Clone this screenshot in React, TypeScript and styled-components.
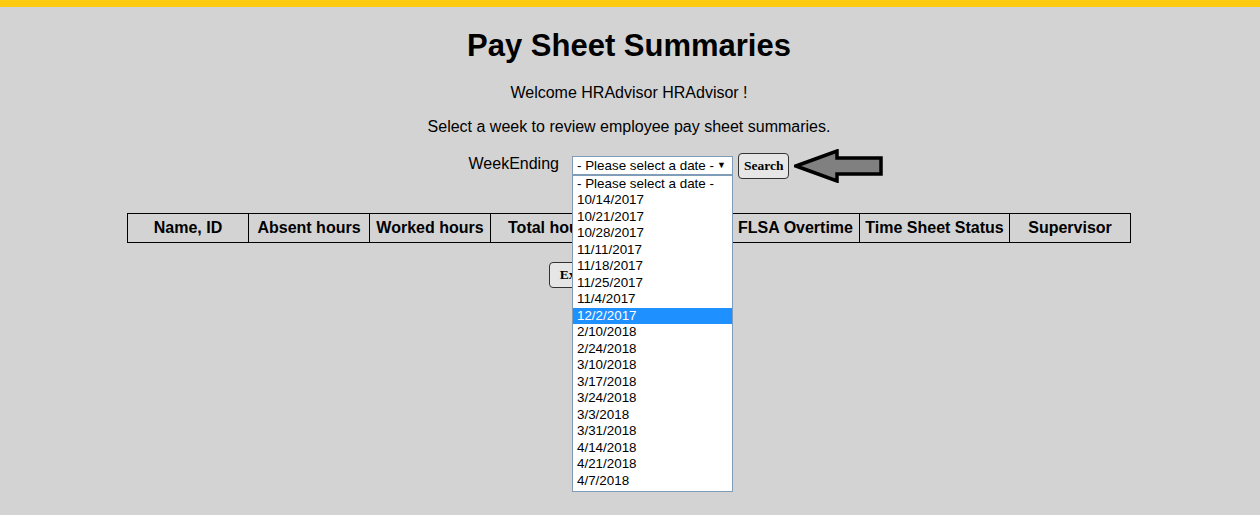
import React from 'react'
import styled, { createGlobalStyle } from 'styled-components'

const GlobalStyle = createGlobalStyle`
    html, body {
        margin: 0;
        padding: 0;
        background-color: #d3d3d3;
        font-family: Arial, "Liberation Sans", sans-serif;
        color: #000;
    }
`

const Page = styled.div`
    min-height: 515px;
    background-color: #d3d3d3;
    border-top: 7px solid #fdca10;
    text-align: center;
    padding: 21px 2px 0 0;
    box-sizing: border-box;
`

const Title = styled.h1`
    font-size: 31px;
    font-weight: 700;
    margin: 0 0 20px 0;
    line-height: 36px;
`

const Line = styled.p<{ $gap?: number }>`
    font-size: 16px;
    line-height: 18px;
    margin: 0 0 ${(p) => p.$gap ?? 0}px 0;
`

const FormRow = styled.div`
    display: flex;
    justify-content: center;
    align-items: center;
    height: 26px;
    margin-top: 17px;
    position: relative;
`

const Label = styled.span`
    font-size: 16px;
    margin-right: 13px;
    position: relative;
    top: -2px;
`

const SelectWrap = styled.div`
    position: relative;
    width: 161px;
    height: 19px;
    margin-right: 5px;
    top: -1px;
`

const SelectBox = styled.div`
    box-sizing: border-box;
    width: 100%;
    height: 100%;
    background: #fff;
    border: 1px solid #7f9db9;
    font-size: 13.4px;
    line-height: 17px;
    text-align: left;
    padding-left: 4px;
    display: flex;
    justify-content: space-between;
    align-items: center;
    span.caret {
        font-size: 9px;
        margin-right: 6px;
    }
`

const OptionList = styled.ul`
    position: absolute;
    top: 100%;
    left: 0;
    width: 161px;
    box-sizing: border-box;
    margin: 0;
    padding: 0 0 2px 0;
    list-style: none;
    background: #fff;
    border: 1px solid #7f9db9;
    text-align: left;
    z-index: 10;
`

const Option = styled.li<{ $active?: boolean }>`
    font-size: 13.4px;
    line-height: 16.5px;
    height: 16.5px;
    padding-left: 4px;
    color: ${(p) => (p.$active ? '#fff' : '#000')};
    background: ${(p) => (p.$active ? '#1e90ff' : 'transparent')};
`

const Button = styled.button<{ $pad?: number }>`
    font-family: "Times New Roman", "Liberation Serif", serif;
    font-weight: 700;
    font-size: 13.5px;
    height: 26px;
    padding: 0 ${(p) => p.$pad ?? 5}px;
    background: #e6e6e6;
    border: 1px solid #333;
    border-radius: 4px;
    color: #000;
`

const Arrow = styled.svg`
    position: absolute;
    left: 794px;
    top: -4px;
`

const Table = styled.table`
    margin: 34px auto 0 auto;
    border-collapse: collapse;
    width: 1003px;
    table-layout: fixed;
    th {
        border: 1px solid #000;
        font-size: 16px;
        font-weight: 700;
        height: 29px;
        padding: 0 2px;
        white-space: nowrap;
        overflow: hidden;
        box-sizing: border-box;
    }
`

const ExportRow = styled.div`
    margin-top: 19px;
`

const columns = [
    { label: 'Name, ID', width: 121 },
    { label: 'Absent hours', width: 121 },
    { label: 'Worked hours', width: 121 },
    { label: 'Total hours', width: 121 },
    { label: 'Paid hours', width: 120 },
    { label: 'FLSA Overtime', width: 128 },
    { label: 'Time Sheet Status', width: 150 },
    { label: 'Supervisor', width: 121 },
]

const dates = [
    '- Please select a date -',
    '10/14/2017',
    '10/21/2017',
    '10/28/2017',
    '11/11/2017',
    '11/18/2017',
    '11/25/2017',
    '11/4/2017',
    '12/2/2017',
    '2/10/2018',
    '2/24/2018',
    '3/10/2018',
    '3/17/2018',
    '3/24/2018',
    '3/3/2018',
    '3/31/2018',
    '4/14/2018',
    '4/21/2018',
    '4/7/2018',
]

const App = () => {
    return (
        <Page>
            <GlobalStyle />
            <Title>Pay Sheet Summaries</Title>
            <Line $gap={16}>Welcome HRAdvisor HRAdvisor !</Line>
            <Line>Select a week to review employee pay sheet summaries.</Line>
            <FormRow>
                <Label>WeekEnding</Label>
                <SelectWrap>
                    <SelectBox>
                        <span>- Please select a date -</span>
                        <span className='caret'>▼</span>
                    </SelectBox>
                    <OptionList>
                        {dates.map((d) => (
                            <Option key={d} $active={d === '12/2/2017'}>{d}</Option>
                        ))}
                    </OptionList>
                </SelectWrap>
                <Button>Search</Button>
                <Arrow width="90" height="34" viewBox="0 0 90 34">
                    <path
                        d="M2 17 L43 2 L43 9 L87 9 L87 25 L43 25 L43 32 Z"
                        fill="#808080"
                        stroke="#000"
                        strokeWidth="3.5"
                        strokeLinejoin="miter"
                    />
                </Arrow>
            </FormRow>
            <Table>
                <colgroup>
                    {columns.map((c) => (
                        <col key={c.label} style={{ width: c.width }} />
                    ))}
                </colgroup>
                <thead>
                    <tr>
                        {columns.map((c) => (
                            <th key={c.label}>{c.label}</th>
                        ))}
                    </tr>
                </thead>
            </Table>
            <ExportRow>
                <Button $pad={10}>Export Pay Sheet Totals</Button>
            </ExportRow>
        </Page>
    )
}

export default App
